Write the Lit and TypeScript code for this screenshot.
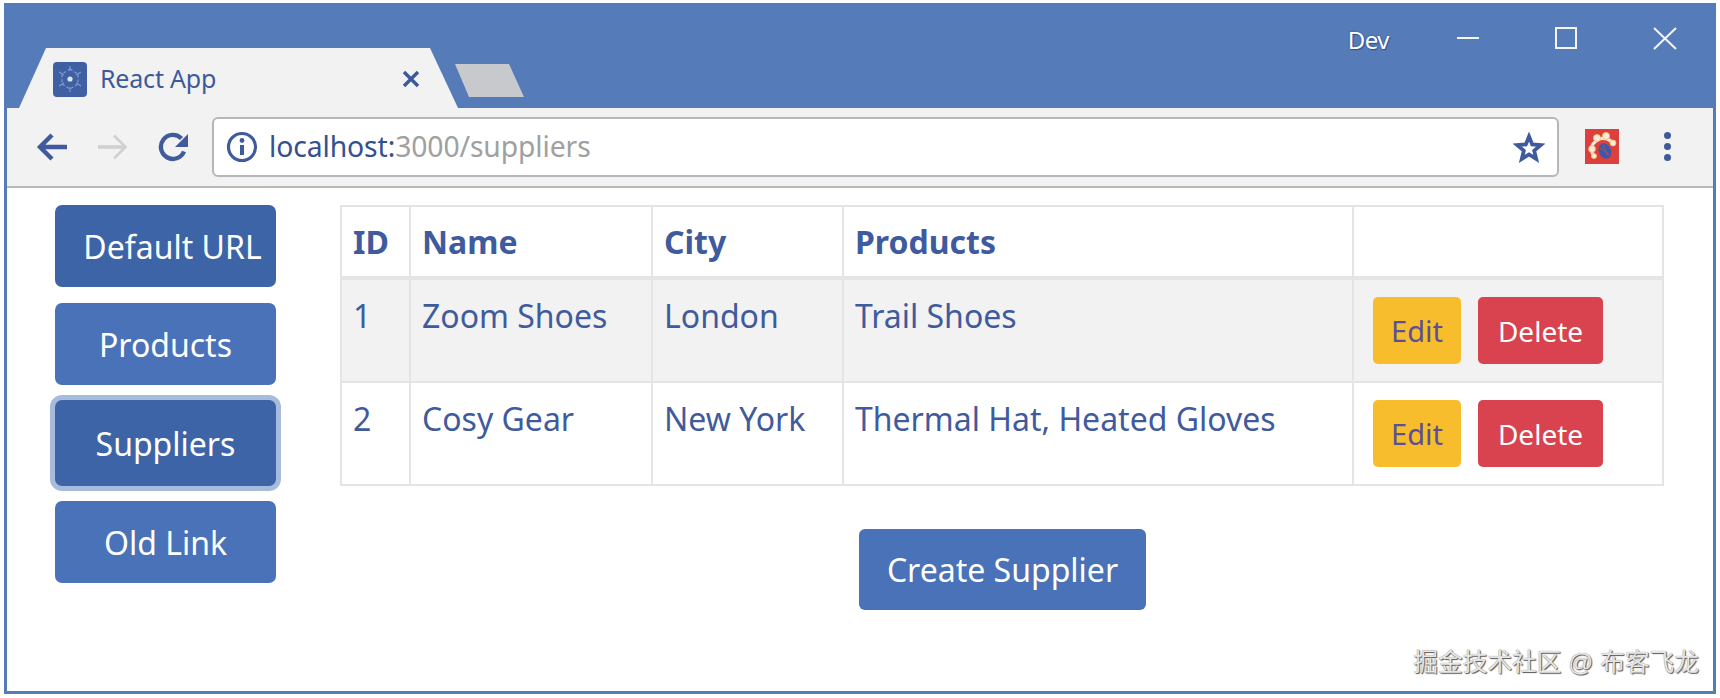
import { LitElement, html, css, svg } from 'lit';
import { customElement } from 'lit/decorators.js';

type Supplier = { id: number; name: string; city: string; products: string };

const SUPPLIERS: Supplier[] = [
  { id: 1, name: 'Zoom Shoes', city: 'London', products: 'Trail Shoes' },
  { id: 2, name: 'Cosy Gear', city: 'New York', products: 'Thermal Hat, Heated Gloves' },
];

const atomIcon = svg`
  <svg class="fav-icon" viewBox="0 0 34 34" fill="none" stroke="#7f9bd0" stroke-width="1.2">
    <path d="M17 7 L25 12 L25 22 L17 27 L9 22 L9 12 Z" stroke-dasharray="3 2"/>
    <path d="M17 4v5M17 25v5M6 10l5 3M23 21l5 3M28 10l-5 3M11 21l-5 3"/>
    <circle cx="17" cy="17" r="2.6" fill="#dfe7f5" stroke="none"/>
  </svg>`;

const extensionIcon = svg`
  <svg class="ext-icon" viewBox="0 0 34 35">
    <rect width="34" height="35" fill="#dc3f3c"/>
    <path d="M8 25C5 20 7 15 11 12C14 9 20 8 26 12" fill="none" stroke="#f6e9df" stroke-width="3.4"/>
    <g fill="#f6e9df" stroke="#eac45f" stroke-width=".8">
      <circle cx="7" cy="20" r="3.4"/>
      <circle cx="9" cy="27" r="2.6"/>
      <circle cx="12" cy="9" r="3.6"/>
      <circle cx="21" cy="7" r="3.6"/>
      <circle cx="28" cy="14" r="3"/>
    </g>
    <ellipse cx="20" cy="22" rx="6" ry="8" fill="#3e57a6" transform="rotate(-25 20 22)"/>
    <path d="M15 19l9 7M18 16l5 10" stroke="#b9475f" stroke-width="1"/>
  </svg>`;

@customElement('app-root')
export class AppRoot extends LitElement {
  static override styles = css`
    :host {
      display: block;
      width: 1720px;
      height: 698px;
      box-sizing: border-box;
      padding: 3px 4px 4px 4px;
      background: #fff;
      font-family: 'Noto Sans', 'Open Sans', sans-serif;
    }

    .window {
      height: 100%;
      box-sizing: border-box;
      border: solid #567bb9;
      border-width: 1px 3px 3px 3px;
      display: flex;
      flex-direction: column;
      position: relative;
    }

    /* Title bar */
    .titlebar {
      height: 104px;
      flex: none;
      background: #567bb9;
      display: flex;
      align-items: flex-end;
      padding-left: 12px;
    }

    .tab {
      width: 439px;
      height: 60px;
      box-sizing: border-box;
      flex: none;
      background: #f2f2f2;
      clip-path: polygon(0 100%, 27px 0, 411px 0, 439px 100%);
      display: flex;
      align-items: center;
      padding: 0 34px 0 34px;
      color: #3c5a9a;
    }

    .favicon {
      width: 34px;
      height: 35px;
      margin-top: 2px;
      flex: none;
      background: #3f60a3;
      border-radius: 4px;
    }

    .fav-icon {
      display: block;
      width: 34px;
      height: 34px;
    }

    .tab-title {
      margin-left: 13px;
      flex: 1;
      font-size: 25px;
      line-height: 1;
      letter-spacing: -0.2px;
      margin-top: 1px;
    }

    .tab-close {
      width: 18px;
      height: 18px;
      margin-top: 2px;
      margin-right: 4px;
    }

    .new-tab {
      width: 69px;
      height: 33px;
      margin: 0 0 11px -3px;
      background: #c8c9cc;
      clip-path: polygon(0 0, 54px 0, 100% 100%, 14px 100%);
      flex: none;
    }

    .caption {
      margin-left: auto;
      height: 100%;
      display: flex;
      align-items: flex-start;
      color: #fff;
    }

    .dev {
      font-size: 24px;
      line-height: 26px;
      margin-top: 23px;
      text-shadow: 0 0 2px #2f4f93, 1px 1px 1px #2f4f93;
      letter-spacing: -0.5px;
    }

    .cap-icon {
      width: 24px;
      height: 24px;
      margin-top: 22px;
      display: block;
      stroke: #f4f6fb;
      fill: none;
      stroke-width: 2;
    }

    .cap-min {
      margin-left: 67px;
    }
    .cap-max {
      margin-left: 74px;
    }
    .cap-close {
      margin-left: 75px;
      margin-right: 36px;
    }

    /* Toolbar */
    .toolbar {
      height: 80px;
      flex: none;
      box-sizing: border-box;
      background: #f2f2f2;
      border-bottom: 2px solid #b9b9b9;
      display: flex;
      align-items: center;
      padding: 0 0 1px 29px;
    }

    .nav-icon {
      width: 32px;
      height: 32px;
      flex: none;
      display: block;
    }

    .forward {
      margin-left: 29px;
    }
    .reload {
      margin-left: 29px;
    }

    .omnibox {
      margin-left: 22px;
      width: 1347px;
      height: 60px;
      flex: none;
      box-sizing: border-box;
      background: #fff;
      border: 2px solid #b5b7bd;
      border-radius: 6px;
      display: flex;
      align-items: center;
      padding: 0 12px 0 12px;
    }

    .info {
      width: 32px;
      height: 32px;
      flex: none;
    }

    .url {
      margin-left: 11px;
      flex: 1;
      font-size: 28.3px;
      line-height: 1;
      color: #a0a0a0;
      letter-spacing: -0.1px;
    }

    .url b {
      font-weight: 400;
      color: #34508f;
    }

    .star {
      width: 32px;
      height: 32px;
      flex: none;
    }

    .ext-icon {
      width: 34px;
      height: 35px;
      margin-left: 26px;
      flex: none;
      display: block;
    }

    .menu {
      margin-left: 45px;
      display: flex;
      flex-direction: column;
      gap: 4px;
    }

    .menu i {
      display: block;
      width: 7px;
      height: 7px;
      border-radius: 50%;
      background: #3f5a9c;
    }

    /* Page */
    .page {
      flex: 1;
      background: #fff;
      display: flex;
      align-items: flex-start;
      padding: 17px 0 0 48px;
    }

    .side {
      width: 221px;
      flex: none;
      display: flex;
      flex-direction: column;
    }

    .side-btn {
      display: block;
      width: 100%;
      height: 82px;
      box-sizing: border-box;
      border: none;
      border-radius: 7px;
      background: #4a72b8;
      color: #fff;
      font: inherit;
      font-size: 32px;
      margin-bottom: 16px;
      padding: 0;
    }

    .side-btn.hovered {
      background: #3e64a8;
      padding-left: 14px;
    }

    .side-btn.focused {
      height: 86px;
      margin-top: -1px;
      margin-bottom: 15px;
      background: #3e64a8;
      box-shadow: 0 0 0 5px #a7bcdc;
    }

    .content {
      margin-left: 64px;
      width: 1322px;
      flex: none;
    }

    table {
      width: 100%;
      border-collapse: collapse;
      table-layout: fixed;
      color: #3f5b9d;
      font-size: 32px;
    }

    th,
    td {
      border: 2px solid #e4e4e4;
      padding: 0 0 0 11px;
      text-align: left;
      vertical-align: top;
      line-height: 40px;
      box-sizing: border-box;
    }

    th {
      height: 72px;
      font-weight: 700;
      padding-top: 15px;
      border-bottom-width: 4px;
    }

    td {
      height: 103px;
      padding-top: 16px;
    }

    tbody tr:nth-child(odd) td {
      height: 104px;
      background: #f2f2f2;
    }

    td.actions {
      padding: 17px 0 0 19px;
    }

    .act {
      display: flex;
      gap: 17px;
    }

    .act button {
      height: 67px;
      border: none;
      border-radius: 5px;
      font: inherit;
      font-size: 28px;
      padding: 0;
    }

    .act .edit {
      width: 88px;
      background: #f7bd2d;
      color: #5c4f95;
      font-size: 29px;
    }

    .delete {
      width: 125px;
      background: #d8434f;
      color: #fff;
    }

    .create-row {
      display: flex;
      justify-content: center;
      margin-top: 43px;
      padding-left: 3px;
    }

    .create {
      width: 287px;
      height: 81px;
      border: none;
      border-radius: 6px;
      background: #4a72b8;
      color: #fff;
      font: inherit;
      font-size: 32px;
      padding: 0;
    }

    .watermark {
      position: absolute;
      right: 14px;
      bottom: 12px;
      font-family: 'Liberation Sans', 'Noto Sans CJK SC', sans-serif;
      font-size: 24.7px;
      line-height: 32px;
      color: #e6e6e6;
      text-shadow: 1px 1px 1px #555, 0 0 1px #777;
    }
  `;

  private renderRow(s: Supplier) {
    return html`
      <tr>
        <td>${s.id}</td>
        <td>${s.name}</td>
        <td>${s.city}</td>
        <td>${s.products}</td>
        <td class="actions">
          <div class="act">
            <button class="edit">Edit</button>
            <button class="delete">Delete</button>
          </div>
        </td>
      </tr>
    `;
  }

  override render() {
    return html`
      <div class="window">
        <div class="titlebar">
          <div class="tab">
            <div class="favicon">${atomIcon}</div>
            <span class="tab-title">React App</span>
            <svg class="tab-close" viewBox="0 0 18 18" stroke="#3c5a9a" stroke-width="3.4" fill="none">
              <path d="M2 2l14 14M16 2L2 16" />
            </svg>
          </div>
          <div class="new-tab"></div>
          <div class="caption">
            <span class="dev">Dev</span>
            <svg class="cap-icon cap-min" viewBox="0 0 24 24"><path d="M1 12h22" /></svg>
            <svg class="cap-icon cap-max" viewBox="0 0 24 24"><rect x="2" y="2" width="20" height="20" /></svg>
            <svg class="cap-icon cap-close" viewBox="0 0 24 24"><path d="M1 2l22 21M23 2L1 23" /></svg>
          </div>
        </div>

        <div class="toolbar">
          <svg class="nav-icon" viewBox="0 0 32 32" fill="none" stroke="#3f5b9d" stroke-width="4.4">
            <path d="M31 16H5M16 4 4 16 16 28" />
          </svg>
          <svg class="nav-icon forward" viewBox="0 0 32 32" fill="none" stroke="#d0d0d0" stroke-width="2.6">
            <path d="M1 16h27" stroke-width="3.6" />
            <path d="M17 4.5 28.5 16 17 27.5" />
          </svg>
          <svg class="nav-icon reload" viewBox="0 0 32 32" fill="none">
            <path d="M26 20.5A12 12 0 1 1 23.5 7.5" stroke="#3f5b9d" stroke-width="4.4" />
            <path d="M30 3v13H17Z" fill="#3f5b9d" />
          </svg>
          <div class="omnibox">
            <svg class="info" viewBox="0 0 32 32" fill="none" stroke="#3f5b9d">
              <circle cx="16" cy="16" r="13.5" stroke-width="3.2" />
              <path d="M16 14v10" stroke-width="4" />
              <circle cx="16" cy="9.5" r="2.4" fill="#3f5b9d" stroke="none" />
            </svg>
            <span class="url"><b>localhost:</b>3000/suppliers</span>
            <svg class="star" viewBox="0 0 32 32" fill="none" stroke="#3f5b9d" stroke-width="3.8" stroke-linejoin="miter">
              <path d="M16 5.5l3.2 7.9 8.5.7-6.5 5.5 2 8.3L16 23.4l-7.2 4.5 2-8.3-6.5-5.5 8.5-.7Z" />
            </svg>
          </div>
          ${extensionIcon}
          <div class="menu"><i></i><i></i><i></i></div>
        </div>

        <div class="page">
          <nav class="side">
            <button class="side-btn hovered">Default URL</button>
            <button class="side-btn">Products</button>
            <button class="side-btn focused">Suppliers</button>
            <button class="side-btn">Old Link</button>
          </nav>
          <div class="content">
            <table>
              <colgroup>
                <col style="width:69px" />
                <col style="width:242px" />
                <col style="width:191px" />
                <col style="width:510px" />
                <col style="width:310px" />
              </colgroup>
              <thead>
                <tr>
                  <th>ID</th>
                  <th>Name</th>
                  <th>City</th>
                  <th>Products</th>
                  <th></th>
                </tr>
              </thead>
              <tbody>
                ${SUPPLIERS.map((s) => this.renderRow(s))}
              </tbody>
            </table>
            <div class="create-row"><button class="create">Create Supplier</button></div>
          </div>
        </div>

        <div class="watermark">掘金技术社区 @ 布客飞龙</div>
      </div>
    `;
  }
}

declare global {
  interface HTMLElementTagNameMap {
    'app-root': AppRoot;
  }
}
